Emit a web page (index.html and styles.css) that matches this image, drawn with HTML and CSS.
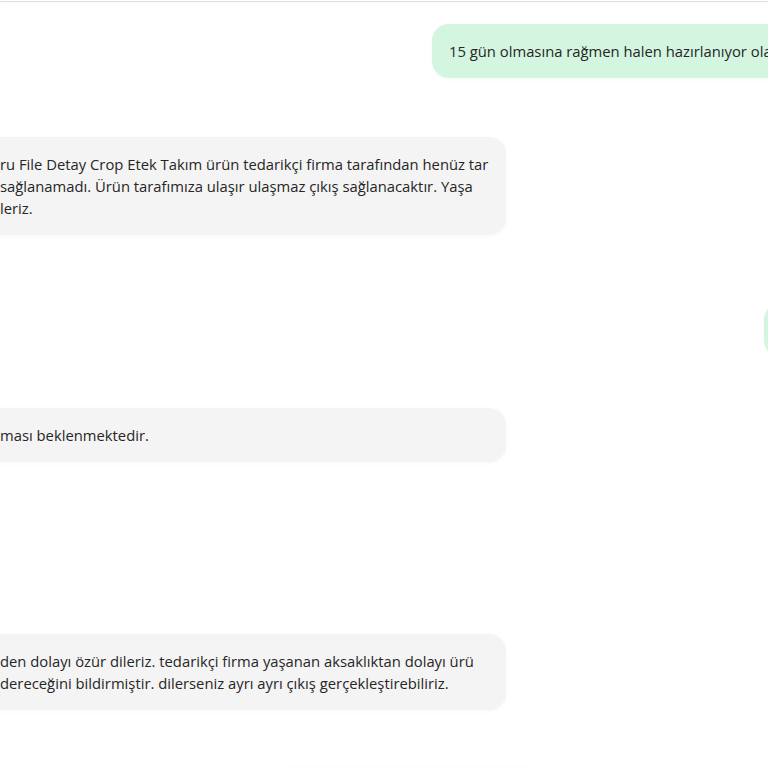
FILE: index.html
```html
<!DOCTYPE html>
<html lang="tr">
<head>
<meta charset="utf-8">
<title>Sohbet</title>
<link rel="stylesheet" href="styles.css">
</head>
<body>
<div class="divider"></div>
<div class="chat">
  <div class="bubble out out-1">15 gün olmasına rağmen halen hazırlanıyor olarak görünüyor</div>
  <div class="bubble in in-1">
    <span class="line">ru File Detay Crop Etek Takım ürün tedarikçi firma tarafından henüz tar</span>
    <span class="line">sağlanamadı. Ürün tarafımıza ulaşır ulaşmaz çıkış sağlanacaktır. Yaşa</span>
    <span class="line">leriz.</span>
  </div>
  <div class="bubble out out-2">Ne zaman gelir?</div>
  <div class="bubble in in-2">
    <span class="line">ması beklenmektedir.</span>
  </div>
  <div class="bubble in in-3">
    <span class="line">den dolayı özür dileriz. tedarikçi firma yaşanan aksaklıktan dolayı ürü</span>
    <span class="line">dereceğini bildirmiştir. dilerseniz ayrı ayrı çıkış gerçekleştirebiliriz.</span>
  </div>
  <div class="bubble out out-3">Tamam, ayrı ayrı gönderebilirsiniz.</div>
</div>
</body>
</html>
```
FILE: styles.css
```css
html, body {
  margin: 0;
  padding: 0;
  background: #ffffff;
  overflow: hidden;
  height: 768px;
}
body {
  font-family: "Open Sans", "Liberation Sans", sans-serif;
  font-size: 14.8px;
  color: #262626;
}
.divider {
  height: 1px;
  margin-top: 1px;
  background: #dedede;
  box-shadow: 0 1px 2px rgba(0,0,0,0.03);
}
.chat {
  display: flex;
  flex-direction: column;
  align-items: flex-start;
  margin: 0 -600px 0 -40px;
  padding-top: 22px;
}
.bubble {
  box-sizing: border-box;
  border-radius: 17px;
  padding: 16px 17px;
  line-height: 22px;
  white-space: nowrap;
  box-shadow: 0 1px 4px rgba(0,0,0,0.035);
}
.line { display: block; }
.out {
  background: #d4f5e0;
}
.in {
  background: #f4f4f4;
  width: 546px;
  padding-left: 40px;
}
.out-1 { margin-left: 472px; }
.in-1 { margin-top: 59px; }
.out-2 { margin-left: 804px; margin-top: 68px; }
.in-2 { margin-top: 51px; }
.in-3 { margin-top: 172px; }
.out-3 { margin-left: 313px; margin-top: 58px; }
```
